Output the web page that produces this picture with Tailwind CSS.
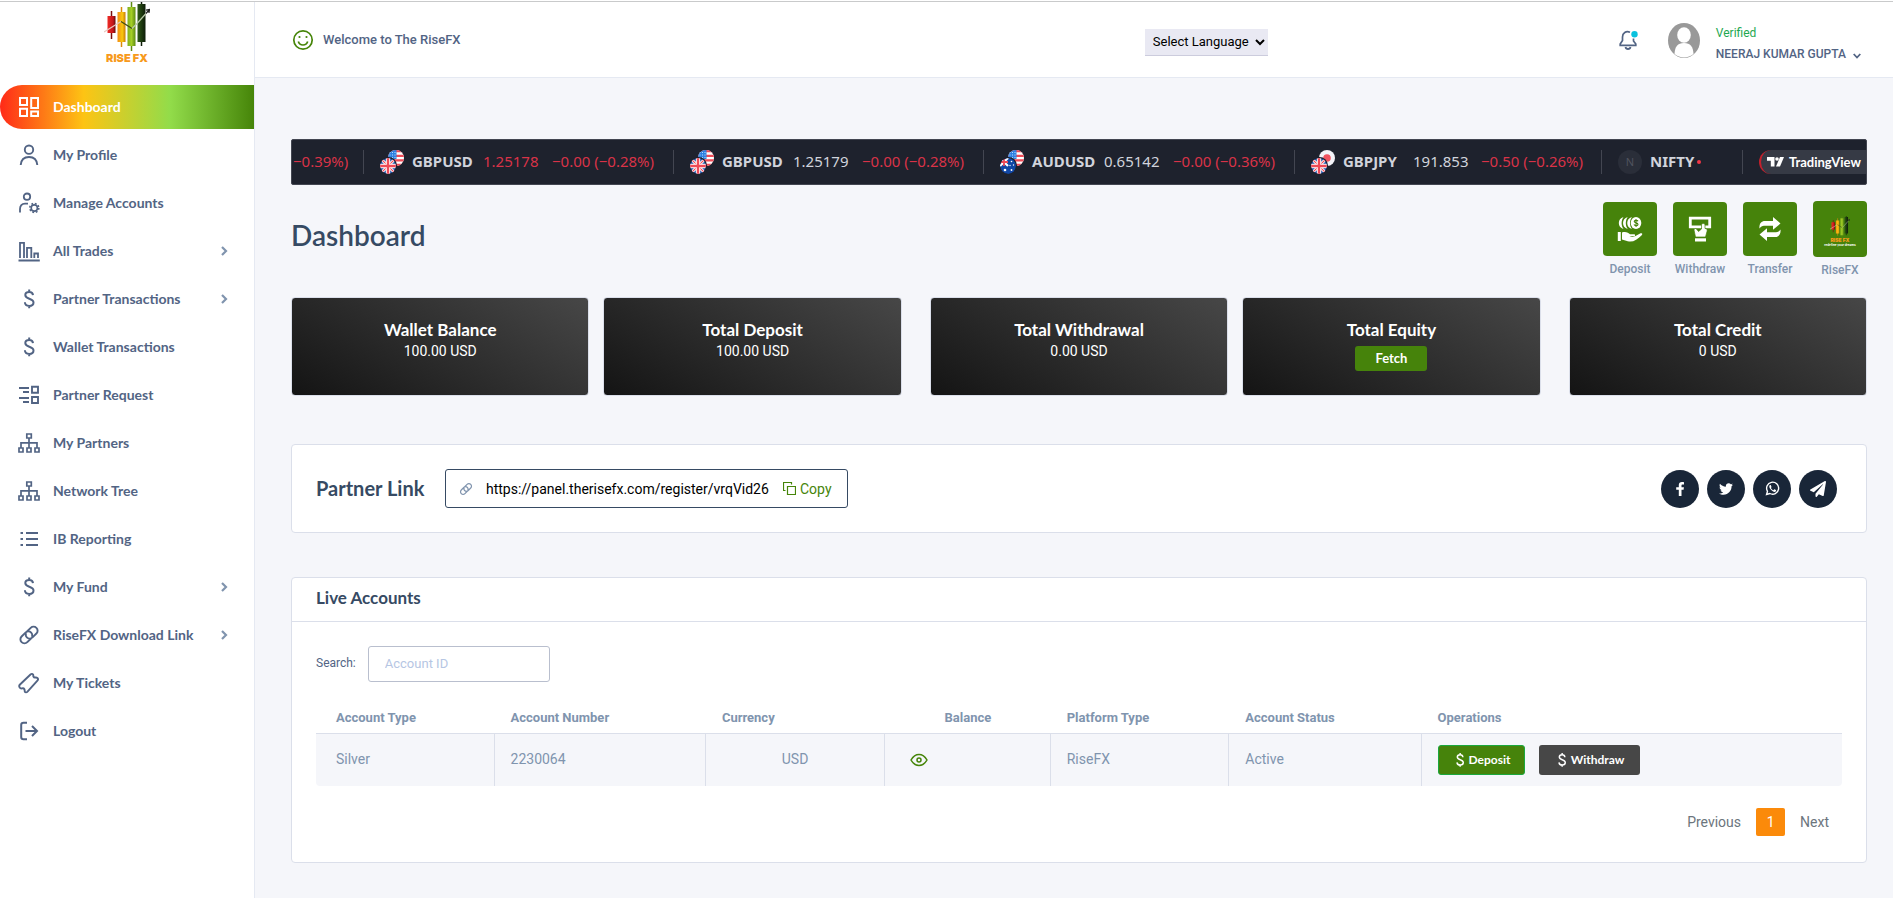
<!DOCTYPE html>
<html lang="en">
<head>
<meta charset="utf-8">
<meta name="viewport" content="width=device-width, initial-scale=1">
<title>RiseFX Dashboard</title>
<script src="https://cdn.jsdelivr.net/npm/@tailwindcss/browser@4"></script>
</head>
<body class="bg-white pt-px font-['Roboto',sans-serif] text-sm text-[#526484]">

<svg class="absolute size-0" aria-hidden="true">
  <defs>
    <linearGradient id="gr"><stop offset="0" stop-color="#ee2a24"/><stop offset=".7" stop-color="#c4161c"/><stop offset="1" stop-color="#5a0d0d"/></linearGradient>
    <linearGradient id="gy"><stop offset="0" stop-color="#f28c13"/><stop offset=".6" stop-color="#f9c80e"/><stop offset="1" stop-color="#c77a08"/></linearGradient>
    <linearGradient id="gg"><stop offset="0" stop-color="#7fae1d"/><stop offset=".5" stop-color="#a4cf26"/><stop offset="1" stop-color="#5d8a12"/></linearGradient>
    <linearGradient id="gd"><stop offset="0" stop-color="#2f5a17"/><stop offset="1" stop-color="#0d1c08"/></linearGradient>
    <clipPath id="disc"><circle cx="8" cy="8" r="8"/></clipPath>
  </defs>
  <symbol id="candles" viewBox="0 0 46 50">
    <path d="M7.500 9v28" stroke="#7a1010" stroke-width="1.500"/><path d="M3.500 14h8v17h-8z" fill="url(#gr)"/>
    <path d="M17.500 5v40" stroke="#d98a0c" stroke-width="1.500"/><path d="M13.500 10h8v30h-8z" fill="url(#gy)"/>
    <path d="M27.500 0v49" stroke="#5d8a12" stroke-width="1.500"/><path d="M23.500 5h8v39h-8z" fill="url(#gg)"/>
    <path d="M37.500 0v44" stroke="#0d1c08" stroke-width="1.500"/><path d="M33.500 2h8v38h-8z" fill="url(#gd)"/>
    <path d="M0 30 17 19.500" stroke="#e8c9c0" stroke-width="1.200" fill="none"/><path d="m17 19.500 11 7" stroke="#3c4a14" stroke-width="1.200" fill="none"/><path d="m28 26.500 5-5 9-10" stroke="#b9c9a8" stroke-width="1.200" fill="none"/><path d="m42 11.500 3-3.500m-3 .2 3.600-.8-.7 3.600" stroke="#222" stroke-width="1.200" fill="none"/>
  </symbol>
  <symbol id="i-dollar" viewBox="0 0 22 22"><path d="M15 7.200C14.800 5 13.300 3.900 11.200 3.900 9 3.900 7.300 5 7.300 7c0 4.700 8.200 2.700 8.200 7.600 0 2.200-1.800 3.400-4.200 3.400-2.500 0-4.300-1.200-4.400-3.700M11.200 1.500V4M11.200 18v2.300" fill="none" stroke="currentColor" stroke-width="2"/></symbol>
  <symbol id="i-tree" viewBox="0 0 22 22"><path d="M8.800 2h4.500v4H8.800zM1 16h4v4H1zM9 16h4v4H9zM17 16h4v4h-4zM11 6v10M3 16v-5.200h16V16" fill="none" stroke="currentColor" stroke-width="1.700"/></symbol>
  <symbol id="i-chev" viewBox="0 0 8 10"><path d="m2 1 4 4-4 4" fill="none" stroke="#8094ae" stroke-width="2.200"/></symbol>
  <symbol id="i-link" viewBox="0 0 22 22"><path d="m9 7.500 3.700-3.700a4 4 0 0 1 5.700 0 4 4 0 0 1 0 5.700l-3.900 3.900a4 4 0 0 1-5.700 0c-1.100-1.100-1.300-2.300-.9-3.400M13 14.500l-3.700 3.700a4 4 0 0 1-5.700 0 4 4 0 0 1 0-5.700l3.900-3.900a4 4 0 0 1 5.700 0c1.100 1.100 1.300 2.300.9 3.400" fill="none" stroke="currentColor" stroke-width="1.900" stroke-linecap="round"/></symbol>
  <symbol id="f-us" viewBox="0 0 16 16"><g clip-path="url(#disc)"><path fill="#fff" d="M0 0h16v16H0z"/><path d="M0 1.200h16M0 5.800h16M0 10.400h16M0 15h16" stroke="#ee4a57" stroke-width="2.300"/><path fill="#2f80e0" d="M0 0h8.500v9H0z"/><path d="M1.500 2.500h6M1.500 5h6M1.500 7.500h6" stroke="#b8dcff" stroke-width="1" stroke-dasharray="1 1.500"/></g></symbol>
  <symbol id="f-gb" viewBox="0 0 16 16"><g clip-path="url(#disc)"><path fill="#1e50a8" d="M0 0h16v16H0z"/><path d="m0 0 16 16M16 0 0 16" stroke="#fff" stroke-width="3"/><path d="m0 0 16 16M16 0 0 16" stroke="#ee4a57" stroke-width="1.200"/><path d="M8 0v16M0 8h16" stroke="#fff" stroke-width="4.400"/><path d="M8 0v16M0 8h16" stroke="#ee4a57" stroke-width="2.400"/></g></symbol>
  <symbol id="f-au" viewBox="0 0 16 16"><g clip-path="url(#disc)"><path fill="#1147a5" d="M0 0h16v16H0z"/><path d="m0 0 8 8M8 0 0 8" stroke="#fff" stroke-width="2.200"/><path d="M4 0v8M0 4h8" stroke="#ee4a57" stroke-width="1.800"/><g fill="#fff"><circle cx="5" cy="12" r="1.300"/><circle cx="11.500" cy="3.500" r=".8"/><circle cx="13.500" cy="7" r=".7"/><circle cx="10" cy="7.500" r=".7"/><circle cx="11.500" cy="12" r=".9"/></g></g></symbol>
  <symbol id="f-jp" viewBox="0 0 16 16"><circle cx="8" cy="8" r="8" fill="#f3f3f8"/><circle cx="8" cy="8" r="3.800" fill="#f0525f"/></symbol>
</svg>

<div class="flex min-h-[897px] border-t border-[#c9cacb]">
  <!-- Sidebar -->
  <aside class="w-[255px] shrink-0 border-r border-[#e5e9f2] bg-white">
    <a href="#" aria-label="Rise FX" class="flex h-[83px] flex-col items-center">
      <svg class="h-[50px] w-[46px]"><use href="#candles"/></svg>
      <span class="font-['Inter',sans-serif] text-[11px] leading-[12px] font-black text-[#f79a1c]">RISE FX</span>
    </a>
    <nav class="flex flex-col gap-1 font-['Lato',sans-serif] text-sm font-bold">
      <a href="#" class="flex h-11 items-center gap-[13px] rounded-l-full bg-[linear-gradient(90deg,#ff2a18_0%,#fdc414_33%,#92dc4a_67%,#468509_100%)] pb-px pl-[18px] text-white">
        <svg class="size-[22px]" viewBox="0 0 22 22"><path d="M2 2h7v7H2zM13.200 2H20v10h-6.800zM2 12.800h7V20H2zM13.200 15.500H20V20h-6.800z" fill="none" stroke="currentColor" stroke-width="2"/></svg>Dashboard</a>
      <a href="#" class="flex h-11 items-center gap-[13px] pb-px pl-[18px]">
        <svg class="size-[22px]" viewBox="0 0 22 22"><circle cx="11" cy="5.700" r="4.200" fill="none" stroke="currentColor" stroke-width="1.900"/><path d="M2.700 21c.4-5 3.500-8 8.300-8s7.900 3 8.300 8" fill="none" stroke="currentColor" stroke-width="1.900"/></svg>My Profile</a>
      <a href="#" class="flex h-11 items-center gap-[13px] pb-px pl-[18px]">
        <svg class="size-[22px]" viewBox="0 0 22 22"><g fill="none" stroke="currentColor"><circle cx="9" cy="4.700" r="3.200" stroke-width="1.800"/><path d="M2 20.500V17c0-3.300 1.800-5.300 5-5.300h3" stroke-width="1.800"/><circle cx="16.300" cy="16" r="3.100" stroke-width="1.600"/><circle cx="16.300" cy="16" r="4.500" stroke-width="1.600" stroke-dasharray="1.800 1.734"/></g></svg>Manage Accounts</a>
      <a href="#" class="flex h-11 items-center gap-[13px] pb-px pl-[18px]">
        <svg class="size-[22px]" viewBox="0 0 22 22"><path d="M.5 20.500h21.300M2 18V2.800h4V18M9 18V7.800h4.300V18M16.300 18v-4.500H20V18" fill="none" stroke="currentColor" stroke-width="1.800"/></svg>All Trades
        <svg class="mr-[26px] ml-auto h-[10px] w-2"><use href="#i-chev"/></svg></a>
      <a href="#" class="flex h-11 items-center gap-[13px] pb-px pl-[18px]"><svg class="size-[22px]"><use href="#i-dollar"/></svg>Partner Transactions
        <svg class="mr-[26px] ml-auto h-[10px] w-2"><use href="#i-chev"/></svg></a>
      <a href="#" class="flex h-11 items-center gap-[13px] pb-px pl-[18px]"><svg class="size-[22px]"><use href="#i-dollar"/></svg>Wallet Transactions</a>
      <a href="#" class="flex h-11 items-center gap-[13px] pb-px pl-[18px]">
        <svg class="size-[22px]" viewBox="0 0 22 22"><path d="M1 4h10M5 8h6M1 14h10M5 18h6M14 2.800h6v6h-6zM14 13h6v6h-6z" fill="none" stroke="currentColor" stroke-width="1.900"/></svg>Partner Request</a>
      <a href="#" class="flex h-11 items-center gap-[13px] pb-px pl-[18px]"><svg class="size-[22px]"><use href="#i-tree"/></svg>My Partners</a>
      <a href="#" class="flex h-11 items-center gap-[13px] pb-px pl-[18px]"><svg class="size-[22px]"><use href="#i-tree"/></svg>Network Tree</a>
      <a href="#" class="flex h-11 items-center gap-[13px] pb-px pl-[18px]">
        <svg class="size-[22px]" viewBox="0 0 22 22"><path d="M8 5h12M8 11h12M8 17h12M2.500 5h2.500M2.500 11h2.500M2.500 17h2.500" fill="none" stroke="currentColor" stroke-width="2"/></svg>IB Reporting</a>
      <a href="#" class="flex h-11 items-center gap-[13px] pb-px pl-[18px]"><svg class="size-[22px]"><use href="#i-dollar"/></svg>My Fund
        <svg class="mr-[26px] ml-auto h-[10px] w-2"><use href="#i-chev"/></svg></a>
      <a href="#" class="flex h-11 items-center gap-[13px] pb-px pl-[18px]"><svg class="size-[22px]"><use href="#i-link"/></svg>RiseFX Download Link
        <svg class="mr-[26px] ml-auto h-[10px] w-2"><use href="#i-chev"/></svg></a>
      <a href="#" class="flex h-11 items-center gap-[13px] pb-px pl-[18px]">
        <svg class="size-[22px]" viewBox="0 0 22 22"><path d="m2 12.500 10.500-10c1-.9 2-.7 2.600 0 .4.500 0 1.300.3 2 .4.800 1.200 1.200 2 1 .8-.2 1.400 0 2 .5.900.9.900 1.700 0 2.600L9.300 19.800c-.8.800-1.900.6-2.400 0-.5-.6 0-1.700-.5-2.600-.6-1-1.700-1-2.400-.8-1 .2-1.800-.1-2.300-.9-.7-1-.5-2.200.3-3z" fill="none" stroke="currentColor" stroke-width="1.900"/></svg>My Tickets</a>
      <a href="#" class="flex h-11 items-center gap-[13px] pb-px pl-[18px]">
        <svg class="size-[22px]" viewBox="0 0 22 22"><path d="M9 2.800H5.500c-1.500 0-2.300.8-2.300 2.200v12c0 1.500.8 2.300 2.300 2.300H9M7.500 11H19M14 6l5 5-5 5" fill="none" stroke="currentColor" stroke-width="2"/></svg>Logout</a>
    </nav>
  </aside>

  <div class="flex min-w-0 flex-1 flex-col bg-[#f5f6fa]">
    <!-- Top bar -->
    <header class="flex h-[76px] items-center border-b border-[#e5e9f2] bg-white pt-px pr-8 pl-[37px]">
      <svg class="size-[22px] text-[#468509]" viewBox="0 0 22 22"><circle cx="11" cy="11" r="9.200" fill="none" stroke="currentColor" stroke-width="1.700"/><path d="M6.300 12.500c.7 2.200 2.500 3.500 4.700 3.500s4-1.300 4.700-3.500" fill="none" stroke="currentColor" stroke-width="1.700"/><circle cx="7.500" cy="8" r="1.100" fill="currentColor"/><circle cx="14.500" cy="8" r="1.100" fill="currentColor"/></svg>
      <p class="ml-[9px] text-[13px] font-medium">Welcome to The RiseFX</p>
      <div class="flex flex-1 justify-end pt-1 pr-[349px]">
        <select aria-label="Select Language" class="h-[27px] w-[123px] border-b border-[#ccd] bg-[#e9e9f3] pl-1 text-[13px] text-black"><option>Select Language</option></select>
      </div>
      <button type="button" aria-label="Notifications" class="mr-[29px]">
        <svg class="size-[22px]" viewBox="0 0 22 22"><path d="M13 3.200C9 1.500 5.500 4 5.500 8v3.500L3.200 15v1.300h15.600V15l-2.300-3V9.500" fill="none" stroke="#526484" stroke-width="1.700"/><path d="M8.500 18c.3 1.400 1.300 2 2.500 2s2.200-.6 2.500-2" fill="none" stroke="#526484" stroke-width="1.800"/><circle cx="17.500" cy="5.300" r="3.200" fill="#09c2de"/></svg>
      </button>
      <button type="button" class="flex items-center gap-4 text-left">
        <svg class="h-[35px] w-8" viewBox="0 0 32 35" preserveAspectRatio="none"><ellipse cx="16" cy="17.500" rx="16" ry="17.500" fill="#999"/><ellipse cx="16" cy="12" rx="6.800" ry="7.700" fill="#fff"/><path d="M6.500 31C7 23.500 9.500 20 16 20s9 3.500 9.500 11c-5.500 4.500-13.500 4.500-19 0z" fill="#fff"/></svg>
        <span class="flex flex-col pt-2 text-xs font-medium">
          <span class="h-5 leading-[16px] font-normal text-[#1ea850]">Verified</span>
          <span class="flex items-center gap-[7px] leading-[18px]">NEERAJ KUMAR GUPTA
            <svg class="mt-[3px] h-[6px] w-2" viewBox="0 0 8 6"><path d="m.7 1 3.300 3.500L7.300 1" fill="none" stroke="currentColor" stroke-width="1.800"/></svg></span>
        </span>
      </button>
    </header>

    <main class="flex flex-col px-9 pt-[61px] pr-[26px]">
      <!-- Ticker -->
      <section aria-label="Market ticker" class="flex h-[46px] items-center overflow-hidden rounded-[2px] border border-[#434651] bg-[#1e222d] font-['Noto_Sans',sans-serif] text-[15px] whitespace-nowrap text-[#d1d4dc]">
        <div class="flex h-6 w-[72px] shrink-0 items-center border-r border-[#434651] pl-px text-[#d93348]">−0.39%)</div>
        <div class="flex h-6 w-[310px] shrink-0 items-center border-r border-[#434651] pl-4">
          <span class="relative mr-2 size-6"><svg class="absolute top-0 right-0 size-4"><use href="#f-us"/></svg><svg class="absolute bottom-0 left-0 size-[17px] rounded-full bg-[#1e222d] pt-px pr-px"><use href="#f-gb"/></svg></span>
          <b class="w-[71px] font-bold">GBPUSD</b><span class="w-[69px] text-[#d93348]">1.25178</span><span class="text-[#d93348]">−0.00 (−0.28%)</span>
        </div>
        <div class="flex h-6 w-[310px] shrink-0 items-center border-r border-[#434651] pl-4">
          <span class="relative mr-2 size-6"><svg class="absolute top-0 right-0 size-4"><use href="#f-us"/></svg><svg class="absolute bottom-0 left-0 size-[17px] rounded-full bg-[#1e222d] pt-px pr-px"><use href="#f-gb"/></svg></span>
          <b class="w-[71px] font-bold">GBPUSD</b><span class="w-[69px]">1.25179</span><span class="text-[#d93348]">−0.00 (−0.28%)</span>
        </div>
        <div class="flex h-6 w-[311px] shrink-0 items-center border-r border-[#434651] pl-4">
          <span class="relative mr-2 size-6"><svg class="absolute top-0 right-0 size-4"><use href="#f-us"/></svg><svg class="absolute bottom-0 left-0 size-[17px] rounded-full bg-[#1e222d] pt-px pr-px"><use href="#f-au"/></svg></span>
          <b class="w-[72px] font-bold">AUDUSD</b><span class="w-[69px]">0.65142</span><span class="text-[#d93348]">−0.00 (−0.36%)</span>
        </div>
        <div class="flex h-6 w-[307px] shrink-0 items-center border-r border-[#434651] pl-4">
          <span class="relative mr-2 size-6"><svg class="absolute top-0 right-0 size-4"><use href="#f-jp"/></svg><svg class="absolute bottom-0 left-0 size-[17px] rounded-full bg-[#1e222d] pt-px pr-px"><use href="#f-gb"/></svg></span>
          <b class="w-[70px] font-bold">GBPJPY</b><span class="w-[68px]">191.853</span><span class="text-[#d93348]">−0.50 (−0.26%)</span>
        </div>
        <div class="flex h-6 min-w-0 flex-1 items-center border-r border-[#434651] pl-4">
          <span class="mr-2 flex size-6 items-center justify-center rounded-full bg-[#2a2e39] text-[11px] text-[#50535e]">N</span>
          <b class="font-bold">NIFTY</b><span class="ml-[3px] size-1 rounded-full bg-[#f23645]"></span>
        </div>
        <a href="#" class="ml-4 flex h-6 w-[107px] shrink-0 items-center gap-[5px] rounded-l-full border-l-2 border-[#c5202c] bg-[#363a45] pl-[6px] font-['Lato',sans-serif] text-[13px] font-bold text-white">
          <svg class="h-[10px] w-[17px]" viewBox="0 0 17 10"><path d="M0 0h7.500v9.500H3.800V3.700H0z" fill="#fff"/><circle cx="10" cy="2" r="1.800" fill="#fff"/><path d="M13 0h4l-4 9.500H9z" fill="#fff"/></svg>TradingView</a>
      </section>

      <!-- Title and quick actions -->
      <div class="flex h-[112px] justify-between">
        <h1 class="pt-8 font-['Lato',sans-serif] text-[28px] leading-9 font-semibold text-[#364a63]">Dashboard</h1>
        <div class="flex gap-4 pt-4 text-xs font-medium text-[#8094ae]">
          <a href="#" class="flex w-[54px] flex-col items-center gap-[5px] pt-px"><span class="flex size-[54px] items-center justify-center rounded bg-[#46830b]">
            <svg class="size-[26px]" viewBox="0 0 26 26"><g fill="#fff"><path d="M6.500 1C.3 2.500.3 11.500 6.500 13c-2.500-3.500-2.500-8.500 0-12z"/><path d="M10.700 1C4.500 2.500 4.500 11.500 10.700 13c-2.500-3.500-2.500-8.500 0-12z"/><path d="M14.900 1C8.700 2.500 8.700 11.500 14.900 13c-2.500-3.500-2.500-8.500 0-12z"/><ellipse cx="19" cy="7" rx="5.300" ry="6"/><path d="M.8 16h3v9h-3zM5 16.500c4-1.200 6.500.5 8 1.700h4c1.500 0 1.500 2 0 2h-4.500c2 1 4 .9 6-.2l5-2.700c1.500-.6 2.500.7 1.200 1.900-4.500 4.500-9 7.500-14 6L5 23.500z"/></g><path d="M21 5.300c-.5-1.300-3.800-1.300-3.800.3 0 1.700 3.800.9 3.800 2.800 0 1.700-3.300 1.700-4 .2M19 3v8" stroke="#46830b" stroke-width="1.100" fill="none"/></svg></span>Deposit</a>
          <a href="#" class="flex w-[54px] flex-col items-center gap-[5px] pt-px"><span class="flex size-[54px] items-center justify-center rounded bg-[#46830b]">
            <svg class="size-[26px]" viewBox="0 0 26 26"><path d="M3.300 2.200h19.400v8.600H3.300z" fill="none" stroke="#fff" stroke-width="2.800"/><path d="M14.500 9c0-2 3.500-2 3.500 0v3.500c2 0 2.500 1.200 2 3L18.500 21h-10L7 14c0-1.500 1.300-2 2.500-1l2 2.500 3-2.500z" fill="#fff" stroke="#46830b" stroke-width=".7"/><path d="M8 22.300h11v3.200H8z" fill="#fff"/></svg></span>Withdraw</a>
          <a href="#" class="flex w-[54px] flex-col items-center gap-[5px] pt-px"><span class="flex size-[54px] items-center justify-center rounded bg-[#46830b]">
            <svg class="size-[26px]" viewBox="0 0 26 26"><path d="M16 1l7.500 6.500L16 13.800v-4H7c-2 0-3 1-4.500 2.800C2 8 4 5 8 5h8zM10 12.200 2.500 18.600 10 25v-4h8c4 0 6-3 5.500-7.600-1.500 1.800-2.500 2.800-4.500 2.800h-9z" fill="#fff"/></svg></span>Transfer</a>
          <a href="#" class="flex w-[54px] flex-col items-center gap-[5px]"><span class="flex h-14 w-[54px] flex-col items-center justify-center rounded bg-[#46830b] pt-1">
            <svg class="h-[22px] w-5"><use href="#candles"/></svg><span class="font-['Inter',sans-serif] text-[5px] leading-[5px] font-black text-[#f79a1c]">RISE FX</span><span class="font-['Inter',sans-serif] text-[3px] leading-[4px] font-bold text-white">redefine your dreams</span></span>RiseFX</a>
        </div>
      </div>

      <!-- Balance cards -->
      <section aria-label="Balances" class="flex gap-[14px] text-center text-white">
        <div class="h-[99px] flex-1 rounded border border-[#dbdfea] bg-[linear-gradient(30deg,#141414,#474747)] pt-5"><h2 class="font-['Lato',sans-serif] text-[17px] leading-6 font-bold">Wallet Balance</h2><p class="leading-[18px]">100.00 USD</p></div>
        <div class="mr-[14px] h-[99px] flex-1 rounded border border-[#dbdfea] bg-[linear-gradient(30deg,#141414,#474747)] pt-5"><h2 class="font-['Lato',sans-serif] text-[17px] leading-6 font-bold">Total Deposit</h2><p class="leading-[18px]">100.00 USD</p></div>
        <div class="h-[99px] flex-1 rounded border border-[#dbdfea] bg-[linear-gradient(30deg,#141414,#474747)] pt-5"><h2 class="font-['Lato',sans-serif] text-[17px] leading-6 font-bold">Total Withdrawal</h2><p class="leading-[18px]">0.00 USD</p></div>
        <div class="mr-[14px] h-[99px] flex-1 rounded border border-[#dbdfea] bg-[linear-gradient(30deg,#141414,#474747)] pt-5"><h2 class="font-['Lato',sans-serif] text-[17px] leading-6 font-bold">Total Equity</h2><button type="button" class="mt-1 h-[25px] w-[72px] rounded-[3px] bg-[#46830b] font-['Lato',sans-serif] text-[13px] font-bold">Fetch</button></div>
        <div class="h-[99px] flex-1 rounded border border-[#dbdfea] bg-[linear-gradient(30deg,#141414,#474747)] pt-5"><h2 class="font-['Lato',sans-serif] text-[17px] leading-6 font-bold">Total Credit</h2><p class="leading-[18px]">0 USD</p></div>
      </section>

      <!-- Partner link -->
      <section class="mt-12 flex h-[89px] items-center rounded border border-[#dbdfea] bg-white pr-[29px] pl-6">
        <h2 class="w-[129px] pb-px font-['Lato',sans-serif] text-xl font-bold text-[#364a63]">Partner Link</h2>
        <div class="flex h-[39px] w-[403px] items-center rounded-[3px] border border-[#364a63] pl-[13px] text-sm text-black">
          <svg class="mr-[13px] size-[14px] shrink-0 text-[#8094ae]"><use href="#i-link"/></svg>
          <input type="text" readonly aria-label="Partner link" value="https://panel.therisefx.com/register/vrqVid26" class="w-[297px] outline-none">
          <button type="button" class="flex items-center gap-1 text-[#468509]"><svg class="size-[13px]" viewBox="0 0 13 13"><path d="M4.500 4.500h8v8h-8zM2.500 8.500h-2v-8h8v2" fill="none" stroke="currentColor" stroke-width="1.200"/></svg>Copy</button>
        </div>
        <div class="ml-auto flex gap-2">
          <a href="#" aria-label="Facebook" class="flex size-[38px] items-center justify-center rounded-full bg-[#192638]"><svg class="size-[14px]" viewBox="0 0 14 14"><path d="M11 .3v2.300H9.500c-.8 0-1 .4-1 1.100v1.500h2.400l-.3 2.500H8.500V14H5.800V7.700H3.200V5.200h2.600V3.100C5.800 1.100 7 0 8.900 0c.9 0 1.700.1 2.100.3z" fill="#fff"/></svg></a>
          <a href="#" aria-label="Twitter" class="flex size-[38px] items-center justify-center rounded-full bg-[#192638]"><svg class="size-[14px]" viewBox="0 0 512 512"><path d="M459.400 151.700c.3 4.500.3 9.100.3 13.600 0 138.700-105.600 298.600-298.600 298.600-59.500 0-114.700-17.200-161.100-47.100 8.400 1 16.600 1.300 25.300 1.300 49.100 0 94.200-16.600 130.300-44.800-46.100-1-84.800-31.200-98.100-72.800 6.500 1 13 1.600 19.800 1.600 9.400 0 18.800-1.300 27.600-3.600-48.100-9.700-84.100-52-84.100-103v-1.300c14 7.800 30.200 12.700 47.400 13.300-28.300-18.800-46.800-51-46.800-87.400 0-19.500 5.200-37.400 14.300-53 51.700 63.700 129.300 105.300 216.400 109.800-1.600-7.800-2.600-15.900-2.600-24 0-57.800 46.800-104.900 104.900-104.900 30.200 0 57.500 12.700 76.700 33.100 23.700-4.500 46.500-13.300 66.600-25.300-7.800 24.400-24.400 44.800-46.100 57.800 21.100-2.300 41.600-8.100 60.400-16.200-14.300 20.800-32.200 39.300-52.600 54.300z" fill="#fff"/></svg></a>
          <a href="#" aria-label="WhatsApp" class="flex size-[38px] items-center justify-center rounded-full bg-[#192638]"><svg class="size-[15px]" viewBox="0 0 24 24"><path d="M2.500 21.500 4 16.500A9.600 9.600 0 1 1 7.700 20z" fill="none" stroke="#fff" stroke-width="2.200"/><path d="M9.500 7c-.3-.7-1-.7-1.500-.5-2 1.500-1.500 4.500 1.500 7.500s6 4.500 7.800 2.500c.6-.8.6-1.800.2-2l-2.500-1.200c-.5-.2-1 1.200-1.500 1.400-1 .2-4-2.500-4-3.500.2-.6 1-1 .9-1.700z" fill="#fff"/></svg></a>
          <a href="#" aria-label="Telegram" class="flex size-[38px] items-center justify-center rounded-full bg-[#192638]"><svg class="size-4" viewBox="0 0 512 512"><path d="M476 3.200 12.500 270.600c-18.100 10.400-15.800 35.600 2.200 43.200L121 358.400l287.300-253.200c5.500-4.900 13.300 2.600 8.600 8.300L176 407v80.500c0 23.600 28.500 32.900 42.500 15.800L282 426l124.600 52.200c14.200 6 30.400-2.900 33-18.200l72-432C515 7.800 493.300-6.800 476 3.200z" fill="#fff"/></svg></a>
        </div>
      </section>

      <!-- Live accounts -->
      <section class="mt-11 h-[286px] rounded border border-[#dbdfea] bg-white">
        <h2 class="h-11 border-b border-[#dbdfea] px-6 font-['Lato',sans-serif] text-[17px] leading-10 font-bold text-[#364a63]">Live Accounts</h2>
        <div class="px-6 pt-6">
          <div class="flex items-center gap-3 text-xs">
            <label for="acc" class="pb-0.5">Search:</label>
            <input id="acc" type="search" placeholder="Account ID" class="h-9 w-[182px] rounded-[3px] border border-[#b9bfce] px-4 pb-0.5 text-[13px] placeholder:text-[#b6c6e3]">
          </div>
          <table class="mt-[17px] w-full table-fixed border-separate border-spacing-0 text-left text-[#8094ae]">
            <colgroup><col class="w-[11.7%]"><col class="w-[13.85%]"><col class="w-[11.75%]"><col class="w-[10.85%]"><col class="w-[11.7%]"><col class="w-[12.6%]"><col></colgroup>
            <thead class="text-[13px]">
              <tr class="h-[35px]">
                <th scope="col" class="border-b border-[#dbdfea] pt-[5px] pl-5 font-bold">Account Type</th>
                <th scope="col" class="border-b border-[#dbdfea] pt-[5px] pl-4 font-bold">Account Number</th>
                <th scope="col" class="border-b border-[#dbdfea] pt-[5px] pl-4 font-bold">Currency</th>
                <th scope="col" class="border-b border-[#dbdfea] pt-[5px] text-center font-bold">Balance</th>
                <th scope="col" class="border-b border-[#dbdfea] pt-[5px] pl-4 font-bold">Platform Type</th>
                <th scope="col" class="border-b border-[#dbdfea] pt-[5px] pl-4 font-bold">Account Status</th>
                <th scope="col" class="border-b border-[#dbdfea] pt-[5px] pl-4 font-bold">Operations</th>
              </tr>
            </thead>
            <tbody>
              <tr class="h-[52px]">
                <td class="rounded-bl border-r border-[#dbdfea] bg-[#f5f6fa] pb-0.5 pl-5">Silver</td>
                <td class="border-r border-[#dbdfea] bg-[#f5f6fa] pb-0.5 pl-4">2230064</td>
                <td class="border-r border-[#dbdfea] bg-[#f5f6fa] pb-0.5 text-center">USD</td>
                <td class="border-r border-[#dbdfea] bg-[#f5f6fa] pl-[25px]"><button type="button" aria-label="Show balance" class="block"><svg class="h-[14px] w-[18px]" viewBox="0 0 18 14"><path d="M1 7c2-3.500 4.700-5.500 8-5.500S15 3.500 17 7c-2 3.500-4.700 5.500-8 5.500S3 10.500 1 7z" fill="none" stroke="#468509" stroke-width="1.500"/><circle cx="9" cy="7" r="2" fill="none" stroke="#468509" stroke-width="1.500"/></svg></button></td>
                <td class="border-r border-[#dbdfea] bg-[#f5f6fa] pb-0.5 pl-4">RiseFX</td>
                <td class="border-r border-[#dbdfea] bg-[#f5f6fa] pb-0.5 pl-4">Active</td>
                <td class="rounded-br bg-[#f5f6fa] pl-4">
                  <div class="flex gap-[14px] font-['Lato',sans-serif] text-xs font-bold text-white">
                    <button type="button" class="flex h-[30px] w-[87px] items-center justify-center rounded-[3px] border border-[#1ba83e] bg-[#46830b]"><svg class="mr-px size-4"><use href="#i-dollar"/></svg>Deposit</button>
                    <button type="button" class="flex h-[30px] w-[101px] items-center justify-center rounded-[3px] bg-[#474747]"><svg class="mr-px size-4"><use href="#i-dollar"/></svg>Withdraw</button>
                  </div>
                </td>
              </tr>
            </tbody>
          </table>
          <nav aria-label="Pagination" class="mt-[22px] flex items-center justify-end pr-[13px] text-[#6c757d]">
            <a href="#">Previous</a>
            <a href="#" aria-current="page" class="mx-[15px] flex h-[28px] w-[29px] items-center justify-center rounded-[2px] bg-[#fb8a0a] text-white">1</a>
            <a href="#">Next</a>
          </nav>
        </div>
      </section>
    </main>
  </div>
</div>
</body>
</html>
